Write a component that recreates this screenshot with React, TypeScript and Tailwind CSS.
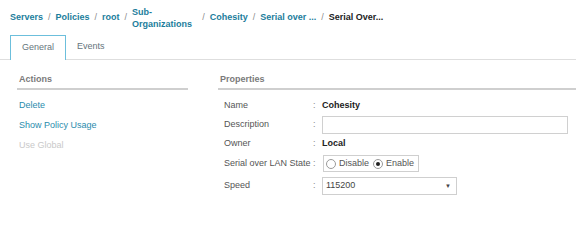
import React from "react";

const Sep = () => <span className="mx-[5px] font-normal text-[#8a8a8a]">/</span>;

function Radio({ checked, label }: { checked?: boolean; label: string }) {
  return (
    <span className="flex items-center">
      <span className="w-[10px] h-[10px] rounded-full border border-[#9a9a9a] bg-white flex items-center justify-center">
        {checked && <span className="w-[4px] h-[4px] rounded-full bg-[#222]" />}
      </span>
      <span className="ml-[3px] text-[#555]">{label}</span>
    </span>
  );
}

function Row({ label, h, className, children }: { label: string; h: string; className?: string; children: React.ReactNode }) {
  return (
    <div className={`flex items-center ${h} ${className ?? ""}`}>
      <span className="w-[95px] pl-[6px] text-[#555] whitespace-nowrap">{label}</span>
      <span className="w-[9px] text-[#888]">:</span>
      {children}
    </div>
  );
}

export default function App() {
  return (
    <div className="w-[576px] h-[205px] bg-white font-['Liberation_Sans',Arial,sans-serif] text-[9px] overflow-hidden">
      {/* Breadcrumb */}
      <div className="h-[35px] flex items-center pl-[10px] pt-[1px] font-bold text-[#1b7d9c] whitespace-nowrap">
        <span>Servers</span>
        <Sep />
        <span>Policies</span>
        <Sep />
        <span>root</span>
        <Sep />
        <span className="flex flex-col leading-[12px] mr-[5px]">
          <span>Sub-</span>
          <span>Organizations</span>
        </span>
        <Sep />
        <span>Cohesity</span>
        <Sep />
        <span>Serial over ...</span>
        <Sep />
        <span className="text-[#222]">Serial Over...</span>
      </div>

      {/* Tabs */}
      <div className="flex h-[25px] border-b border-[#dedede]">
        <div className="ml-[10px] h-[25px] px-[11px] flex items-center border border-b-0 border-[#6cbfdc] bg-white text-[#66757c] -mb-px">
          General
        </div>
        <div className="h-[24px] px-[11px] flex items-center text-[#66757c]">Events</div>
      </div>

      {/* Content */}
      <div className="flex mt-[10px]">
        <div className="ml-[17px] w-[171px]">
          <div className="h-[20px] leading-[18px] pl-[2px] border-b-2 border-[#cfcfcf] font-bold text-[#7a7a7a]">Actions</div>
          <div className="pt-[6px] pl-[2px]">
            <div className="h-[20px] flex items-center text-[#2a8cad]">Delete</div>
            <div className="h-[20px] flex items-center text-[#2a8cad]">Show Policy Usage</div>
            <div className="h-[20px] flex items-center text-[#c9c9c9]">Use Global</div>
          </div>
        </div>
        <div className="ml-[30px] flex-1">
          <div className="h-[20px] leading-[18px] pl-[2px] border-b-2 border-[#cfcfcf] font-bold text-[#7a7a7a]">Properties</div>
          <div className="pt-[6px]">
            <Row label="Name" h="h-[19px]">
              <span className="font-bold text-[#222]">Cohesity</span>
            </Row>
            <Row label="Description" h="h-[19px]">
              <div className="w-[246px] h-[18px] border border-[#d0d0d0] bg-white" />
            </Row>
            <Row label="Owner" h="h-[20px]">
              <span className="font-bold text-[#222]">Local</span>
            </Row>
            <Row label="Serial over LAN State" h="h-[19px]">
              <div className="ml-[1px] w-[96px] h-[17px] border border-[#cfcfcf] flex items-center pl-[2px] gap-[4px]">
                <Radio label="Disable" />
                <Radio checked label="Enable" />
              </div>
            </Row>
            <Row label="Speed" h="h-[20px]" className="mt-[3px]">
              <div className="w-[135px] h-[18px] border border-[#cfcfcf] flex items-center justify-between pl-[3px] pr-[5px] text-[#444]">
                <span>115200</span>
                <span className="text-[6px] text-[#444]">▼</span>
              </div>
            </Row>
          </div>
        </div>
      </div>
    </div>
  );
}
